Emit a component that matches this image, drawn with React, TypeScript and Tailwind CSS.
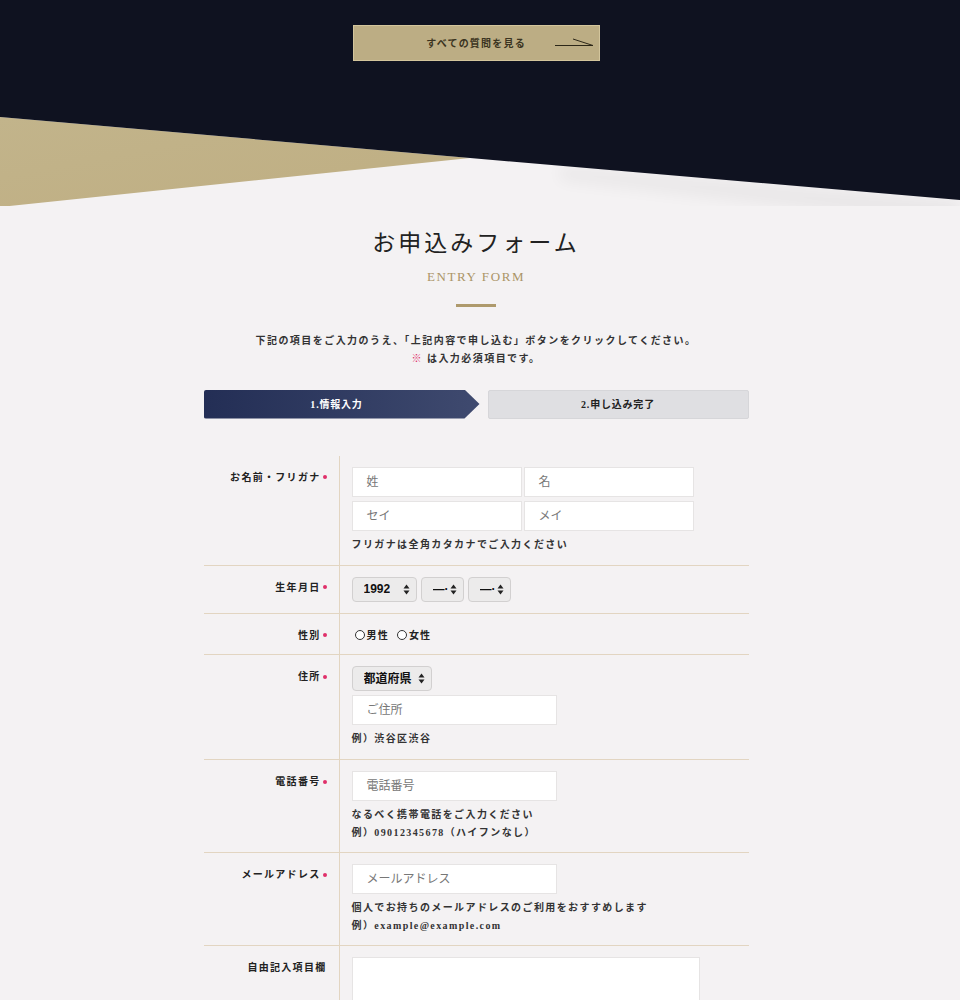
import React from "react";

const serif = "font-['Liberation_Serif','Noto_Sans_CJK_JP',serif]";
const sans = "font-['Liberation_Sans','Noto_Sans_CJK_JP',sans-serif]";

function Dot() {
  return <span className="ml-[2px] inline-block h-[4px] w-[4px] translate-y-[-1px] rounded-full bg-[#e0306a] align-middle" />;
}

function SelectArrows() {
  return (
    <svg width="7" height="11" viewBox="0 0 7 11" className="shrink-0">
      <path d="M3.5 0.5 L6.5 4.5 L0.5 4.5 Z" fill="#222" />
      <path d="M3.5 10.5 L6.5 6.5 L0.5 6.5 Z" fill="#222" />
    </svg>
  );
}

function Select({ label, w }: { label: string; w: string }) {
  return (
    <div className={`flex h-[25px] ${w} items-center justify-between rounded-[4px] border border-[#d2d0d0] bg-[#ecebeb] pl-[11px] pr-[6px] text-[12px] font-bold text-[#111] ${sans}`}>
      <span className="overflow-hidden whitespace-nowrap">{label}</span>
      <SelectArrows />
    </div>
  );
}

function Input({ ph, w, h = "h-[30px]" }: { ph: string; w: string; h?: string }) {
  return (
    <div className={`flex ${h} ${w} items-center border border-[#e6e4e4] bg-white pl-[14px] text-[12px] text-[#777] ${sans}`}>
      {ph}
    </div>
  );
}

function Row({ label, req = true, children, last = false, tall = false }: { label: string; req?: boolean; children: React.ReactNode; last?: boolean; tall?: boolean }) {
  return (
    <div className={`grid grid-cols-[136px_1fr] ${last ? "" : "border-b border-[#e2d5c1]"}`}>
      <div className="border-r border-[#e2d5c1] pr-[12px] pt-[14px] text-right text-[10px] font-bold tracking-[1.3px] text-[#222]">
        {label}
        {req && <Dot />}
      </div>
      <div className={`flex flex-col pl-[12px] pt-[11px] ${tall ? "pb-[11px]" : "pb-[10px]"}`}>{children}</div>
    </div>
  );
}

function Hint({ children }: { children: React.ReactNode }) {
  return <div className="mt-[5px] text-[10px] font-bold leading-[18px] tracking-[1.4px] text-[#333]">{children}</div>;
}

function Radio({ label }: { label: string }) {
  return (
    <span className="mr-[8px] inline-flex items-center">
      <span className="mr-[2px] inline-block h-[10px] w-[10px] rounded-full border border-[#333] bg-white" />
      <span>{label}</span>
    </span>
  );
}

export default function App() {
  return (
    <div className={`min-h-[1000px] w-full bg-[#f4f2f3] ${serif}`}>
      <div className="relative h-[206px] w-full">
        <svg className="absolute inset-0 h-full w-full" viewBox="0 0 960 206" preserveAspectRatio="none">
          <defs>
            <linearGradient id="gold" x1="0" y1="0" x2="1" y2="1">
              <stop offset="0" stopColor="#c2b48b" />
              <stop offset="1" stopColor="#bfae82" />
            </linearGradient>
            <filter id="blur" x="-10%" y="-50%" width="120%" height="200%">
              <feGaussianBlur stdDeviation="8" />
            </filter>
          </defs>
          <polygon points="560,166 960,200 960,226 560,180" fill="#000" opacity="0.045" filter="url(#blur)" />
          <polygon points="0,117 470,158 0,207" fill="url(#gold)" />
          <polygon points="0,0 960,0 960,200 470,158 0,117" fill="#0f1220" />
        </svg>
        <div className="relative flex w-[952px] justify-center pt-[25px]">
          <div className="relative flex h-[36px] w-[247px] items-center justify-center border border-[#d3c59c] bg-[#bcad84]">
            <span className="text-[10px] font-bold tracking-[1.2px] text-[#3b3421]">すべての質問を見る</span>
            <svg className="absolute right-[5px] top-[12px]" width="40" height="10" viewBox="0 0 40 10">
              <path d="M1 7.5 H39 L19 1" fill="none" stroke="#2c2718" strokeWidth="1" />
            </svg>
          </div>
        </div>
      </div>

      <div className="flex w-[952px] flex-col items-center">
        <h1 className="mt-[23px] text-[23px] font-normal leading-[30px] tracking-[3px] text-[#222]">お申込みフォーム</h1>
        <div className="mt-[8px] text-[13px] tracking-[1.6px] text-[#ab9567]">ENTRY FORM</div>
        <div className="mt-[17px] h-[3px] w-[40px] bg-[#ae9a6c]" />
        <p className="mt-[25px] text-center text-[10px] font-bold leading-[18px] tracking-[1.45px] text-[#333]">
          下記の項目をご入力のうえ、「上記内容で申し込む」ボタンをクリックしてください。
          <br />
          <span className="text-[#e0306a]">※</span> は入力必須項目です。
        </p>

        <div className="mt-[22px] flex w-[545px] gap-[8px]">
          <div className="flex h-[29px] w-[276px] items-center justify-center rounded-l-[2px] bg-gradient-to-r from-[#232e55] to-[#3f4a6f] pr-[10px] text-[10px] font-bold tracking-[0.8px] text-white [clip-path:polygon(0_0,calc(100%-15px)_0,100%_50%,calc(100%-15px)_100%,0_100%)]">
            1.情報入力
          </div>
          <div className="flex h-[29px] flex-1 items-center justify-center rounded-[2px] border border-[#d6d6d9] bg-[#dfdfe2] text-[10px] font-bold tracking-[0.8px] text-[#222]">
            2.申し込み完了
          </div>
        </div>

        <div className="mt-[37px] w-[545px]">
          <Row label="お名前・フリガナ" tall>
            <div className="flex gap-[2px]">
              <Input ph="姓" w="w-[170px]" />
              <Input ph="名" w="w-[170px]" />
            </div>
            <div className="mt-[4px] flex gap-[2px]">
              <Input ph="セイ" w="w-[170px]" />
              <Input ph="メイ" w="w-[170px]" />
            </div>
            <Hint>フリガナは全角カタカナでご入力ください</Hint>
          </Row>
          <Row label="生年月日">
            <div className="flex gap-[4px] pb-[1px]">
              <Select label="1992" w="w-[65px]" />
              <Select label="—·" w="w-[43px]" />
              <Select label="—·" w="w-[43px]" />
            </div>
          </Row>
          <Row label="性別">
            <div className="pl-[3px] pt-[3px] text-[10px] font-bold tracking-[1.2px] text-[#222]">
              <Radio label="男性" />
              <Radio label="女性" />
            </div>
          </Row>
          <Row label="住所" tall>
            <Select label="都道府県" w="w-[80px]" />
            <div className="mt-[4px]">
              <Input ph="ご住所" w="w-[205px]" />
            </div>
            <Hint>例）渋谷区渋谷</Hint>
          </Row>
          <Row label="電話番号">
            <Input ph="電話番号" w="w-[205px]" />
            <Hint>
              なるべく携帯電話をご入力ください
              <br />
              例）09012345678（ハイフンなし）
            </Hint>
          </Row>
          <Row label="メールアドレス">
            <Input ph="メールアドレス" w="w-[205px]" />
            <Hint>
              個人でお持ちのメールアドレスのご利用をおすすめします
              <br />
              例）example@example.com
            </Hint>
          </Row>
          <Row label="自由記入項目欄" req={false} last>
            <div className="h-[120px] w-[348px] border border-[#e6e4e4] bg-white" />
          </Row>
        </div>
      </div>
    </div>
  );
}
